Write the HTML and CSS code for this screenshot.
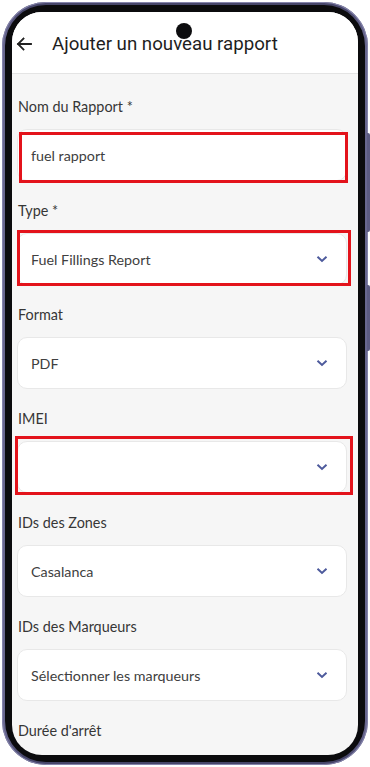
FILE: index.html
```html
<!DOCTYPE html>
<html lang="fr">
<head>
  <meta charset="UTF-8" />
  <meta name="viewport" content="width=device-width, initial-scale=1.0"/>
  <title>Ajouter un nouveau rapport</title>
  <link rel="stylesheet" href="styles.css">
</head>
<body>
  <!-- Phone frame -->
  <div class="phone">
    <span class="side-btn volume"></span>
    <span class="side-btn power"></span>
    <div class="bezel">
      <div class="screen">
        <span class="camera"></span>

        <header class="app-bar">
          <button class="back" aria-label="Retour">
            <svg width="16" height="14" viewBox="0 0 16 14">
              <path d="M15 7H2M7.5 1.5L2 7l5.5 5.5" fill="none" stroke="#222" stroke-width="1.8" stroke-linecap="square"/>
            </svg>
          </button>
          <h1>Ajouter un nouveau rapport</h1>
        </header>

        <form class="report-form">
          <div class="field">
            <label>Nom du Rapport *</label>
            <div class="control marked mark-name">
              <span class="value">fuel rapport</span>
            </div>
          </div>

          <div class="field">
            <label>Type *</label>
            <div class="control marked mark-type">
              <span class="value">Fuel Fillings Report</span>
              <svg class="chevron" width="12" height="8" viewBox="0 0 12 8"><path d="M1.5 1.8L6 6l4.5-4.2" fill="none" stroke="#4d5a9c" stroke-width="2"/></svg>
            </div>
          </div>

          <div class="field">
            <label>Format</label>
            <div class="control">
              <span class="value">PDF</span>
              <svg class="chevron" width="12" height="8" viewBox="0 0 12 8"><path d="M1.5 1.8L6 6l4.5-4.2" fill="none" stroke="#4d5a9c" stroke-width="2"/></svg>
            </div>
          </div>

          <div class="field">
            <label>IMEI</label>
            <div class="control marked mark-imei">
              <span class="value"></span>
              <svg class="chevron" width="12" height="8" viewBox="0 0 12 8"><path d="M1.5 1.8L6 6l4.5-4.2" fill="none" stroke="#4d5a9c" stroke-width="2"/></svg>
            </div>
          </div>

          <div class="field">
            <label>IDs des Zones</label>
            <div class="control">
              <span class="value">Casalanca</span>
              <svg class="chevron" width="12" height="8" viewBox="0 0 12 8"><path d="M1.5 1.8L6 6l4.5-4.2" fill="none" stroke="#4d5a9c" stroke-width="2"/></svg>
            </div>
          </div>

          <div class="field">
            <label>IDs des Marqueurs</label>
            <div class="control">
              <span class="value">Sélectionner les marqueurs</span>
              <svg class="chevron" width="12" height="8" viewBox="0 0 12 8"><path d="M1.5 1.8L6 6l4.5-4.2" fill="none" stroke="#4d5a9c" stroke-width="2"/></svg>
            </div>
          </div>

          <div class="field">
            <label>Durée d'arrêt</label>
          </div>
        </form>
      </div>
    </div>
  </div>
</body>
</html>
```

FILE: styles.css
```css
body {
  margin: 0;
  padding: 2px;
  background-color: #fff;
  font-family: Lato, "Noto Sans", sans-serif;
  color: #333;
}

/* Phone frame */
.phone {
  position: relative;
  width: 366px;
  height: 763px;
  box-sizing: border-box;
  padding: 3px;
  border-radius: 44px;
  background: linear-gradient(90deg, #6b6a92, #47466a 6%, #47466a 94%, #6b6a92);
  box-shadow: inset 0 0 0 1px #8584ab;
}

.side-btn {
  position: absolute;
  right: -2px;
  width: 3px;
  border-radius: 0 2px 2px 0;
  background-color: #5c5b82;
}

.side-btn.volume {
  top: 131px;
  height: 99px;
}

.side-btn.power {
  top: 283px;
  height: 66px;
}

.bezel {
  height: 100%;
  box-sizing: border-box;
  padding: 7px;
  border-radius: 41px;
  background-color: #0b0b0d;
}

.screen {
  position: relative;
  height: 100%;
  overflow: hidden;
  border-radius: 30px;
  background-color: #f6f6f6;
}

.camera {
  position: absolute;
  top: 11px;
  left: 164px;
  width: 16px;
  height: 16px;
  border-radius: 50%;
  background-color: #0d0d0f;
  z-index: 2;
}

/* App bar */
.app-bar {
  display: flex;
  align-items: center;
  height: 62px;
  box-sizing: border-box;
  padding-top: 3px;
  background-color: #fff;
  border-bottom: 1px solid #e4e4e4;
}

.back {
  display: flex;
  margin: 0 0 0 4px;
  padding: 0;
  border: none;
  background: none;
}

.app-bar h1 {
  margin: 0 0 0 20px;
  font-family: Roboto, sans-serif;
  font-size: 18.7px;
  font-weight: 400;
  color: #1e1e1e;
}

/* Form */
.report-form {
  padding: 23px 11px 0 5px;
}

.field label {
  display: block;
  margin: 0 0 12px 1px;
  font-size: 14.4px;
  line-height: 20px;
  color: #363636;
}

.control {
  position: relative;
  display: flex;
  align-items: center;
  justify-content: space-between;
  height: 52px;
  box-sizing: border-box;
  margin-bottom: 20px;
  padding: 0 18px 0 13px;
  background-color: #fff;
  border: 1px solid #e8e8e8;
  border-radius: 10px;
}

.value {
  font-size: 14.3px;
  color: #404040;
}

/* Red annotation boxes */
.marked::after {
  content: "";
  position: absolute;
  border: 3px solid #e3131b;
}

.mark-name::after {
  top: 2px;
  left: 1px;
  right: -2px;
  bottom: -3px;
}

.mark-type::after {
  top: -4px;
  left: -1px;
  right: -5px;
  bottom: -2px;
}

.mark-imei::after {
  top: -6px;
  left: -3px;
  right: -7px;
  bottom: -3px;
}
```
